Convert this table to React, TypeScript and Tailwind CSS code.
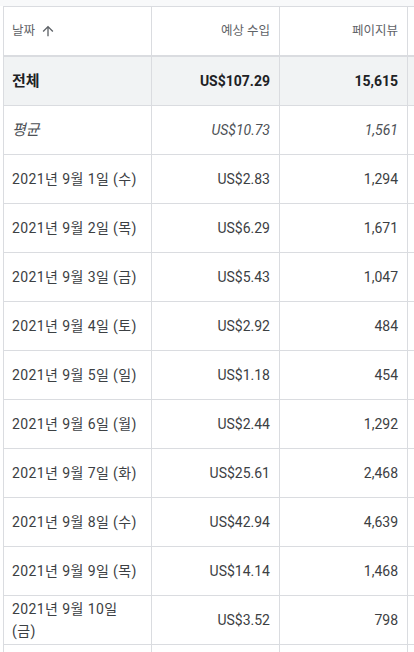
import React from 'react';

type Row = { date: string; revenue: string; views: string };

const rows: Row[] = [
  { date: '2021년 9월 1일 (수)', revenue: 'US$2.83', views: '1,294' },
  { date: '2021년 9월 2일 (목)', revenue: 'US$6.29', views: '1,671' },
  { date: '2021년 9월 3일 (금)', revenue: 'US$5.43', views: '1,047' },
  { date: '2021년 9월 4일 (토)', revenue: 'US$2.92', views: '484' },
  { date: '2021년 9월 5일 (일)', revenue: 'US$1.18', views: '454' },
  { date: '2021년 9월 6일 (월)', revenue: 'US$2.44', views: '1,292' },
  { date: '2021년 9월 7일 (화)', revenue: 'US$25.61', views: '2,468' },
  { date: '2021년 9월 8일 (수)', revenue: 'US$42.94', views: '4,639' },
  { date: '2021년 9월 9일 (목)', revenue: 'US$14.14', views: '1,468' },
  { date: '2021년 9월 10일 (금)', revenue: 'US$3.52', views: '798' },
];

const cell = 'flex items-center border-r border-[#dadce0] pl-2 pr-[9px] leading-[22px]';
const rowCls = 'grid grid-cols-[148px_128px_128px_128px] h-[49px] border-b border-[#dadce0]';

const ArrowUp = () => (
  <svg viewBox="0 0 24 24" className="ml-[5px] h-4 w-4 fill-[#5f6368]">
    <path d="M4 12l1.41 1.41L11 7.83V20h2V7.83l5.58 5.59L20 12l-8-8-8 8z" />
  </svg>
);

export default function App() {
  return (
    <div className="h-[652px] w-[414px] overflow-hidden bg-white font-['Roboto','Noto_Sans_CJK_KR',sans-serif] text-[14px] text-[#3c4043]">
      <div className="h-[6px] bg-[#f8f9fa]" />
      <div className="ml-[3px] w-[532px] border-l border-t border-[#dadce0]">
        <div className="grid grid-cols-[148px_128px_128px_128px] h-[50px] border-b-2 border-[#dadce0] text-[12.5px] text-[#5f6368]">
          <div className={cell}>
            <span>날짜</span>
            <ArrowUp />
          </div>
          <div className={`${cell} justify-end`}>예상 수입</div>
          <div className={`${cell} justify-end`}>페이지뷰</div>
          <div className={cell} />
        </div>

        <div className={`${rowCls} bg-[#f1f3f4] font-bold text-[#202124]`}>
          <div className={`${cell} text-[15px]`}>전체</div>
          <div className={`${cell} justify-end`}>US$107.29</div>
          <div className={`${cell} justify-end`}>15,615</div>
          <div className={cell} />
        </div>

        <div className={`${rowCls} italic text-[#4d5156]`}>
          <div className={`${cell} text-[15px]`}>평균</div>
          <div className={`${cell} justify-end`}>US$10.73</div>
          <div className={`${cell} justify-end`}>1,561</div>
          <div className={cell} />
        </div>

        {rows.map((r) => (
          <div key={r.date} className={rowCls}>
            <div className={`${cell} tracking-[0.4px]`}>{r.date}</div>
            <div className={`${cell} justify-end`}>{r.revenue}</div>
            <div className={`${cell} justify-end`}>{r.views}</div>
            <div className={cell} />
          </div>
        ))}
        <div className={rowCls}>
          <div className={cell} />
          <div className={cell} />
          <div className={cell} />
          <div className={cell} />
        </div>
      </div>
    </div>
  );
}
